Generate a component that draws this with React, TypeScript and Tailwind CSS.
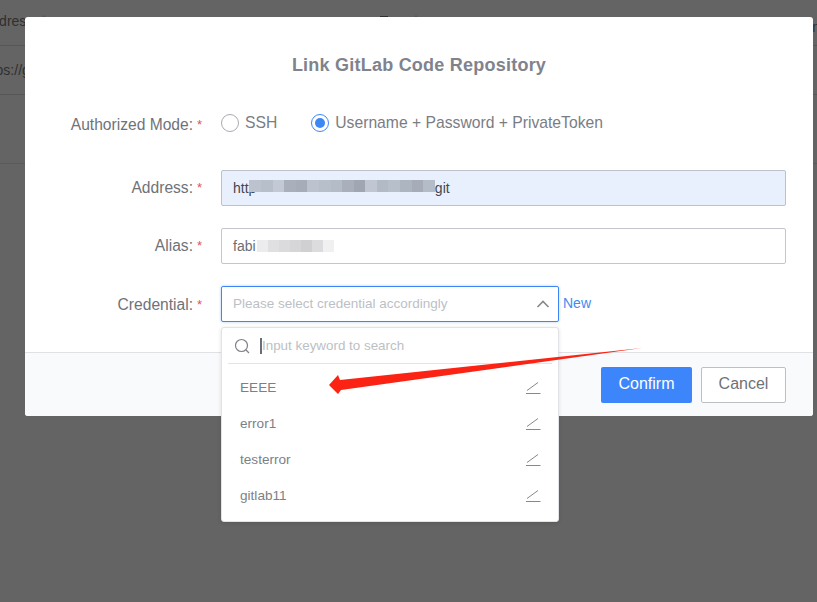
import React from "react";

const FONT = "font-['Liberation_Sans',Arial,sans-serif]";

const mosaicAddress = [
  "#bcc3cf", "#b7bfcb", "#c3cad6", "#a9b0bb", "#a6adb8", "#bcc3cf", "#b7bfcb", "#b4bcc8", "#a9b0bb", "#a0a7b2",
  "#c0c7d3", "#b2bac6", "#b7bfcb", "#adb5c1", "#a6adb8", "#b4bcc8",
];

const mosaicAlias = ["#ececee", "#e0e0e2", "#dbdbdd", "#d6d6d8", "#d0d0d3", "#dcdcde", "#f0f0f1"];

const FieldRow = ({
  label,
  className,
  labelClass = "",
  children,
}: {
  label: string;
  className: string;
  labelClass?: string;
  children: React.ReactNode;
}) => (
  <div className={`-ml-[25px] flex items-center ${className}`}>
    <div className={`flex w-[203px] shrink-0 justify-end text-[15.6px] leading-[20px] text-[#6f7278] ${labelClass}`}>
      <span>{label}</span>
      <span className="ml-[4px] w-[6px] text-[13px] text-[#e0525a]">*</span>
    </div>
    {children}
  </div>
);

const PenLine = () => (
  <svg width="16" height="14" viewBox="0 0 16 14" fill="none" stroke="#85888e" strokeWidth="1">
    <path d="M2 9.5 L13 1.5" />
    <path d="M1 12.5 H15.5" />
  </svg>
);

const DropdownItem = ({ name }: { name: string }) => (
  <div className="flex h-[36px] items-center justify-between pl-[18px] pr-[17px] text-[13.6px] text-[#7c7f86]">
    <span>{name}</span>
    <PenLine />
  </div>
);

export default function App() {
  return (
    <div className={`relative h-[602px] w-[817px] overflow-hidden bg-[#646464] ${FONT}`}>
      {/* 後ろのテーブル */}
      <div className="flex h-[46px] border-b border-[#565656] pt-[10px] text-[14px] leading-[22px] text-[#2f2f2f]">
        <span className="-ml-[18px]">Address</span>
        <span className="ml-[6px] mt-[5px] h-0 w-0 border-x-[5px] border-b-[5px] border-x-transparent border-b-[#565656]" />
        <span className="ml-[331px] mt-[6px] h-[4px] w-[8px] bg-[#2f2f2f]" />
        <span className="ml-[23px] mt-[5px] h-0 w-0 border-x-[5px] border-b-[5px] border-x-transparent border-b-[#565656]" />
        <span className="ml-auto -mr-[3px] mt-[6px]">Action</span>
      </div>
      <div className="h-[49px] border-b border-[#565656] pt-[13px] text-[14px] leading-[22px] text-[#2f2f2f]">
        <span className="-ml-[20px] block">https://gitlab</span>
      </div>
      <div className="h-[69px] border-b border-[#5a5a5a]" />

      {/* モーダル */}
      <div className="absolute left-[25px] top-[17px] flex h-[399px] w-[788px] flex-col rounded-[3px] bg-white">
        <h2 className="pt-[37px] text-center text-[18px] font-bold leading-[22px] tracking-[0.23px] text-[#80838d]">
          Link GitLab Code Repository
        </h2>

        <FieldRow label="Authorized Mode:" labelClass="pt-[2px]" className="mt-[36px] h-[24px]">
          <div className="ml-[18px] flex -translate-y-[1px] items-center text-[15.7px] leading-[20px] text-[#7a7d84]">
            <span className="h-[18px] w-[18px] rounded-full border border-[#a8abb2] bg-white" />
            <span className="ml-[6px]">SSH</span>
            <span className="ml-[34px] flex h-[18px] w-[18px] items-center justify-center rounded-full border border-[#3d87f5] bg-white">
              <span className="h-[10px] w-[10px] rounded-full bg-[#3d87f5]" />
            </span>
            <span className="ml-[6px]">Username + Password + PrivateToken</span>
          </div>
        </FieldRow>

        <FieldRow label="Address:" className="mt-[34px]">
          <div className="ml-[18px] flex h-[36px] w-[565px] items-center rounded-[2px] border border-[#bcc1cb] bg-[#e8f0fe] pl-[11px] text-[14px] text-[#44474d]">
            <span>http</span>
            <div className="relative -ml-[7px] mb-[4px] flex h-[12px]">
              {mosaicAddress.map((c, i) => (
                <span key={i} className="h-[12px] w-[11.6px]" style={{ backgroundColor: c }} />
              ))}
            </div>
            <span>git</span>
          </div>
        </FieldRow>

        <FieldRow label="Alias:" className="mt-[22px]">
          <div className="ml-[18px] flex h-[36px] w-[565px] items-center rounded-[2px] border border-[#c4c6cb] bg-white pl-[11px] text-[14px] text-[#6b6e74]">
            <span>fabi</span>
            <div className="ml-[1px] flex h-[12px]">
              {mosaicAlias.map((c, i) => (
                <span key={i} className="h-[12px] w-[11px]" style={{ backgroundColor: c }} />
              ))}
            </div>
          </div>
        </FieldRow>

        <FieldRow label="Credential:" labelClass="pt-[2px]" className="mt-[22px]">
          <div className="ml-[18px] flex h-[36px] w-[338px] items-center justify-between rounded-[2px] border border-[#3d87f5] bg-white pl-[11px] pr-[8px] text-[13.5px] text-[#bcbfc6] shadow-[0_0_3px_rgba(61,135,245,0.4)]">
            <span className="pt-[1px]">Please select credential accordingly</span>
            <svg width="14" height="14" viewBox="0 0 14 14" fill="none" stroke="#85888e" strokeWidth="1.6">
              <path d="M1.5 10 L7 4.5 L12.5 10" />
            </svg>
          </div>
          <span className="ml-[4px] -translate-y-[1px] text-[14px] text-[#3f8cf0]">New</span>
        </FieldRow>

        <div className="mt-auto flex h-[64px] items-center justify-end gap-[9px] rounded-b-[3px] border-t border-[#dfe1e5] bg-[#f9fafc] pr-[27px]">
          <button className="h-[36px] w-[91px] rounded-[2px] bg-[#3d85fb] pb-[2px] text-[16px] text-white">Confirm</button>
          <button className="h-[36px] w-[85px] rounded-[2px] border border-[#bdbfc4] bg-white pb-[2px] text-[16px] text-[#6f7278]">
            Cancel
          </button>
        </div>
      </div>

      {/* ドロップダウン */}
      <div className="absolute left-[221px] top-[327px] w-[338px] rounded-[3px] border border-[#e2e3e6] bg-white shadow-[0_1px_4px_rgba(0,0,0,0.12)]">
        <div className="mx-[6px] flex h-[36px] items-center border-b border-[#e2e3e6] pl-[6px]">
          <svg width="16" height="16" viewBox="0 0 16 16" fill="none" stroke="#7f8288" strokeWidth="1.2">
            <circle cx="7.5" cy="7.5" r="6" />
            <path d="M12 12 L15 15" />
          </svg>
          <span className="ml-[10px] h-[16px] w-[2px] bg-[#6a6d73]" />
          <span className="pt-[1px] text-[13.4px] text-[#bcbfc6]">Input keyword to search</span>
        </div>
        <div className="pb-[7px] pt-[6px]">
          <DropdownItem name="EEEE" />
          <DropdownItem name="error1" />
          <DropdownItem name="testerror" />
          <DropdownItem name="gitlab11" />
        </div>
      </div>

      {/* 赤い矢印 */}
      <svg className="absolute left-[325px] top-[345px]" width="320" height="52" viewBox="0 0 320 52">
        <path d="M4 40 L13 30 L15 35 L317 3 L16 45 L13 49 Z" fill="#fb2414" />
      </svg>
    </div>
  );
}
